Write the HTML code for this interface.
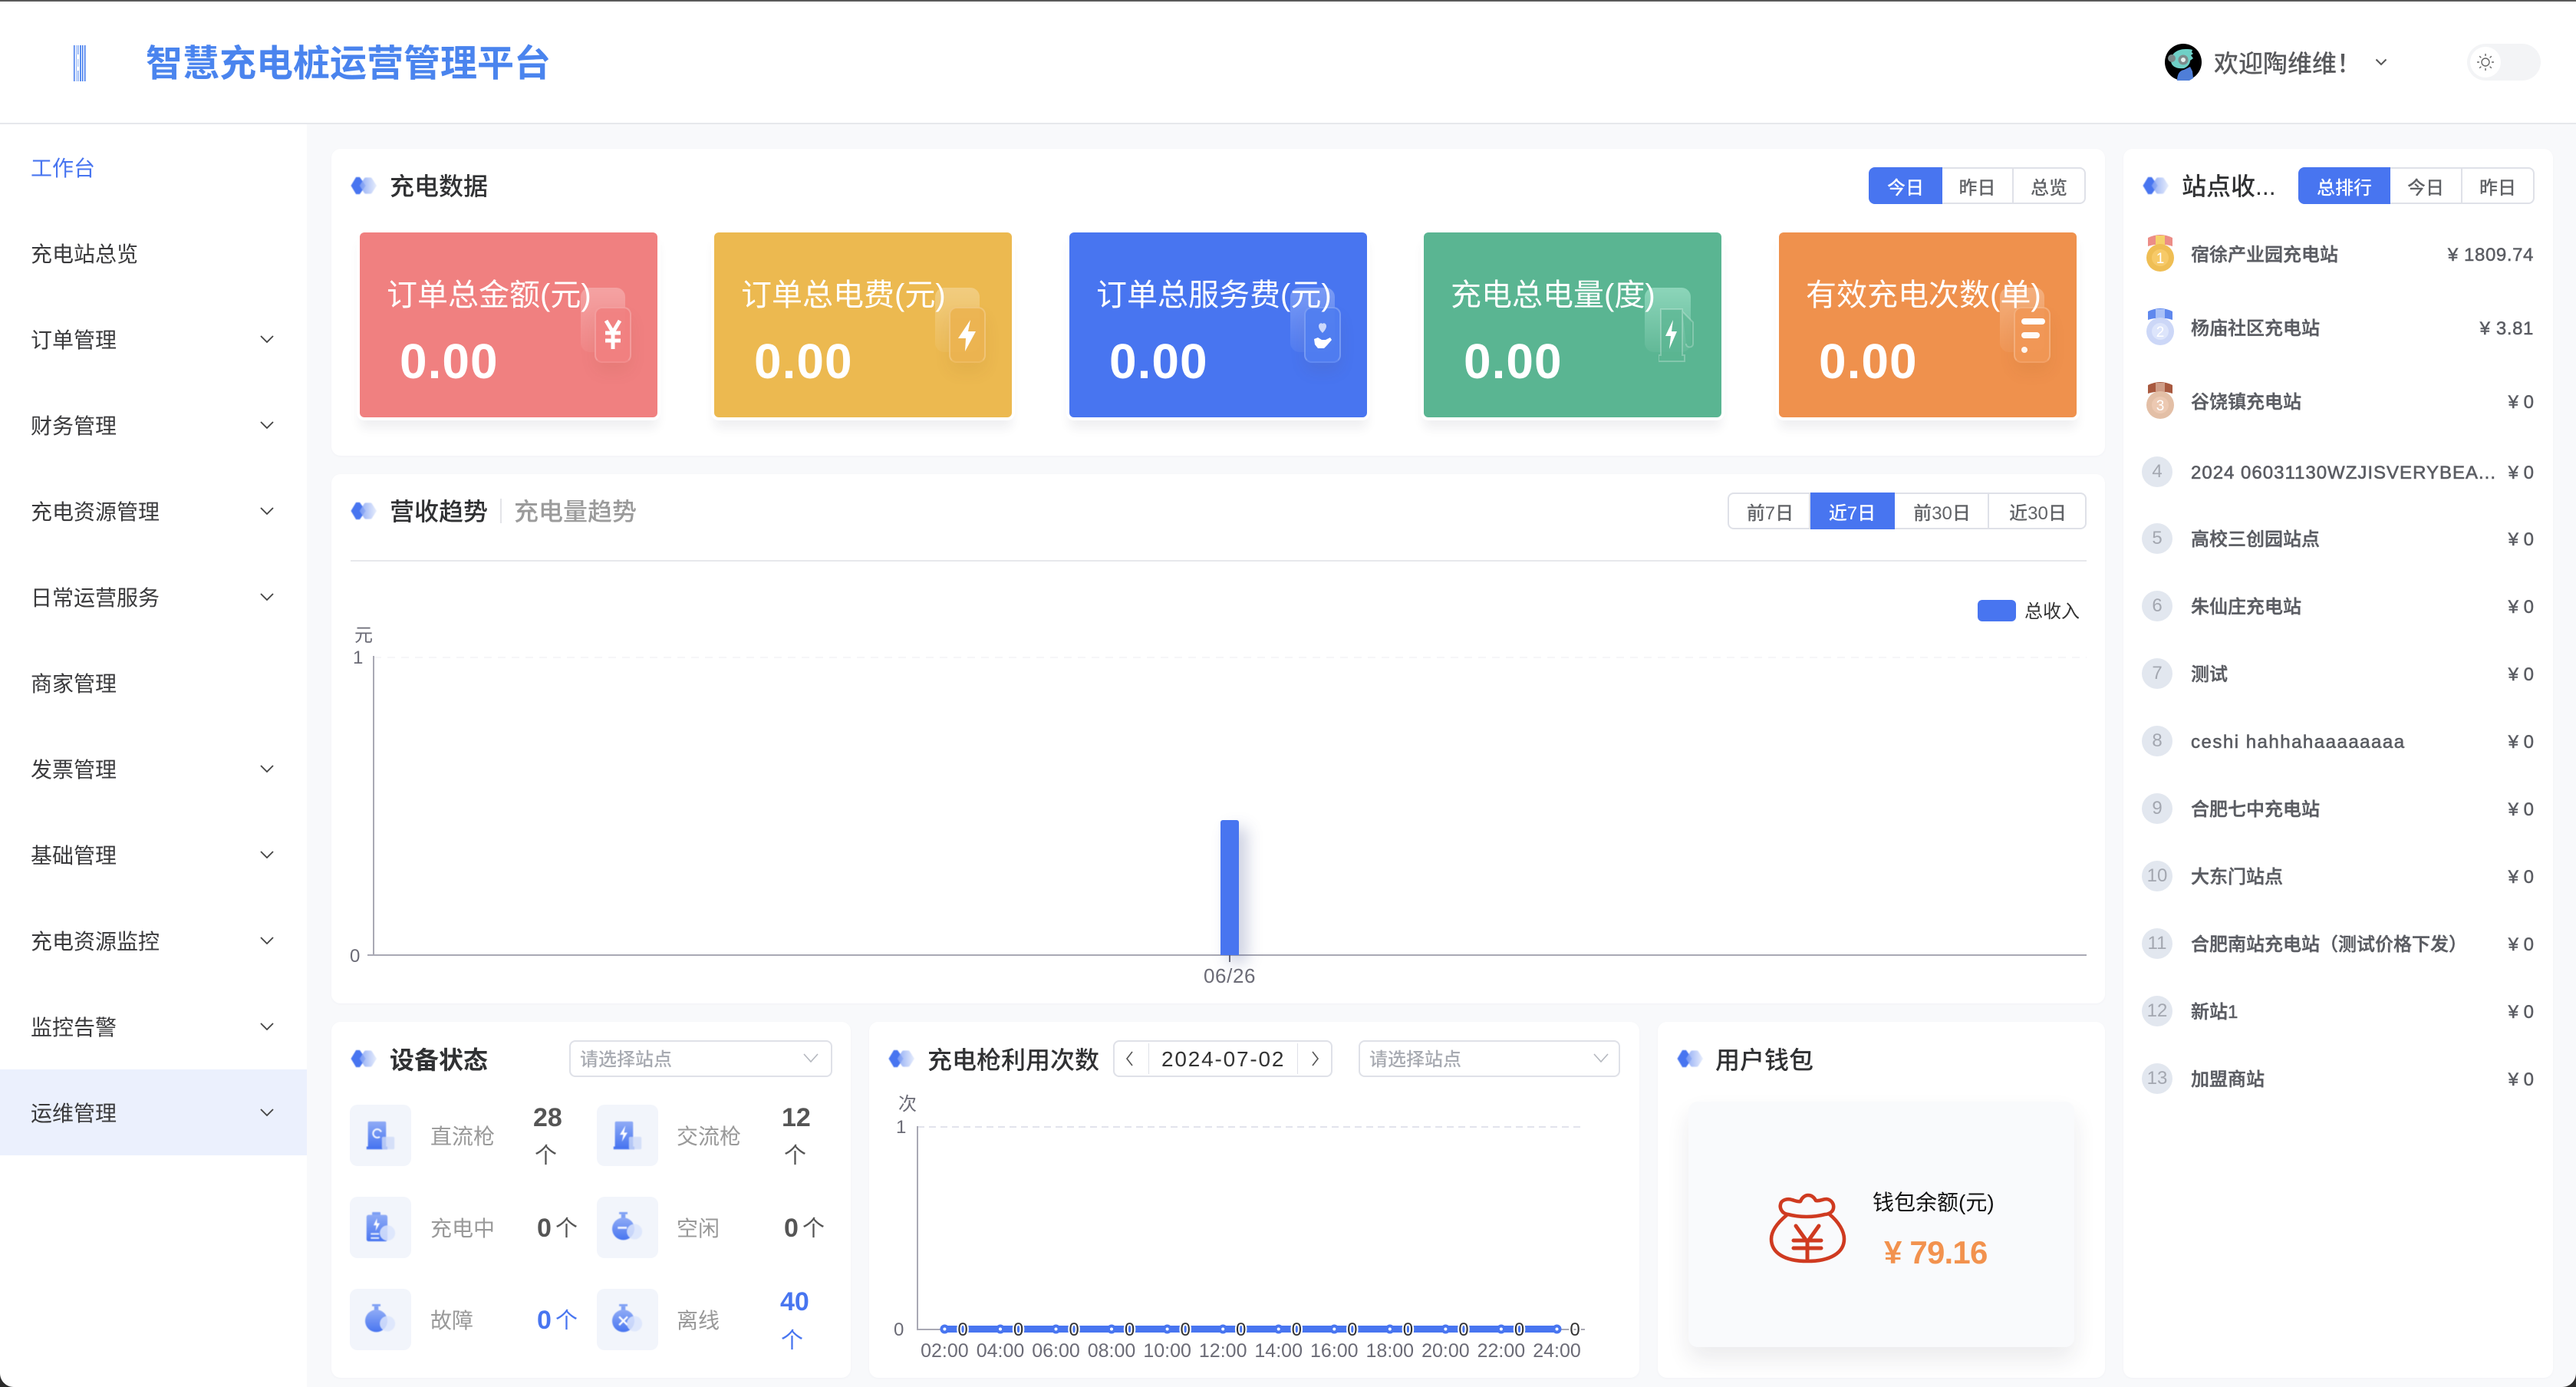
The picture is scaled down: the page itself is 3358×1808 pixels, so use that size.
<!DOCTYPE html>
<html lang="zh-CN">
<head>
<meta charset="utf-8">
<title>智慧充电桩运营管理平台</title>
<style>
*{box-sizing:border-box}
html,body{margin:0;padding:0}
body{width:3358px;height:1808px;overflow:hidden;position:relative;background:#f8f9fb;font-family:"Liberation Sans","Noto Sans CJK SC",sans-serif;color:#333}
.abs{position:absolute}
.t{position:absolute;line-height:40px;margin-top:-18px;white-space:nowrap}
.panel{position:absolute;background:#fff;border-radius:12px;box-shadow:0 1px 3px rgba(30,40,80,.03)}
.h{font-size:32px;font-weight:500;color:#303133}
#header{position:absolute;left:0;top:0;width:3358px;height:162px;background:#fff;border-bottom:2px solid #e6e8ec;border-top:2px solid #5a5a5a}
#side{position:absolute;left:0;top:162px;width:400px;height:1646px;background:#fff}
.m{height:112px;padding-left:40px;font-size:28px;line-height:116px;color:#3a3a3c;position:relative}
.m svg{position:absolute;left:339px;top:51px}
.m.on{background:#ebf0fd}
.seg{position:absolute;height:48px;display:flex;font-size:24px;color:#606266;font-weight:500;background:transparent}
.seg div{display:flex;align-items:center;justify-content:center;border:2px solid #dfe1e8;border-left:0;background:#fff;height:48px}
.seg div:first-child{border-left:2px solid #dfe1e8;border-radius:8px 0 0 8px}
.seg div:last-child{border-radius:0 8px 8px 0}
.seg .a,.seg div.a:first-child{background:#4875f0;color:#fff;border-color:#4875f0}
.card{position:absolute;top:303px;width:388px;height:241px;border-radius:6px;box-shadow:0 0 0 4px #fff,0 14px 14px rgba(30,30,50,.07)}
.card .ct{position:absolute;left:35px;top:62px;font-size:40px;line-height:40px;color:#fff;white-space:nowrap;z-index:3}
.card .cv{position:absolute;left:52px;top:136px;font-size:64px;line-height:64px;color:#fff;font-weight:bold;z-index:3;letter-spacing:1px}
.card .bk{position:absolute;left:288px;top:72px;width:58px;height:84px;border-radius:12px;background:linear-gradient(180deg,rgba(255,255,255,.27),rgba(255,255,255,.05))}
.card .fr{position:absolute;left:306px;top:97px;width:48px;height:73px;border-radius:10px;border:2px solid rgba(255,255,255,.22);border-bottom-color:rgba(255,255,255,.1);box-shadow:0 12px 22px rgba(120,60,20,.07)}
.card svg{position:absolute;left:306px;top:97px}
.tile{position:absolute;width:80px;height:80px;background:#f2f5fb;border-radius:10px}
.tile svg{position:absolute;left:20px;top:20px;filter:blur(.5px)}
.lb{font-size:28px;color:#999}
.val{font-size:34px;font-weight:bold;color:#555}
.ge{font-size:29px;color:#555}
.blue{color:#4875f0}
.sel{position:absolute;height:48px;border:2px solid #dfe1e8;border-radius:8px;background:#fff;top:1356px}
.sel span{position:absolute;left:12px;top:2px;line-height:44px;font-size:24px;font-weight:500;color:#a8abb2;white-space:nowrap}
.sel svg{position:absolute;top:15px}
.rn{font-size:24px;font-weight:500;color:#5b5d63;-webkit-text-stroke:.45px #5b5d63}
.ra{font-size:24px;font-weight:500;color:#5b5d63;-webkit-text-stroke:.5px #5b5d63;right:55px}
.num{position:absolute;left:2792px;width:40px;height:40px;border-radius:50%;background:#e2e7ef;color:#a3a7b0;font-size:24px;line-height:40px;text-align:center}
.ax{font-size:24px;color:#6b6b76}
.ti{filter:blur(.5px)}
</style>
</head>
<body>
<svg width="0" height="0" style="position:absolute">
<defs>
<linearGradient id="fade" x1="0" x2="1" y1="0" y2="0"><stop offset="0" stop-color="#7d9df3"/><stop offset="1" stop-color="#e3eafc"/></linearGradient>
<linearGradient id="tg" x1="0" x2="0" y1="0" y2="1"><stop offset="0" stop-color="#8fabf6"/><stop offset="1" stop-color="#4875f0"/></linearGradient>
<symbol id="ti" viewBox="0 0 32 22">
<path d="M7 1h4l7 10-7 10H7L1 11z" fill="#4875f0" stroke="#4875f0" stroke-width="1" stroke-linejoin="round"/>
<path d="M19 1h5c1 0 2 .5 2.500 1.500L32 11l-5.500 8.500C26 20.500 25 21 24 21h-5c-1 0-2-.5-2.500-1.500L11 11l5.500-8.500C17 1.500 18 1 19 1z" fill="url(#fade)" opacity=".85"/>
</symbol>
<symbol id="chev" viewBox="0 0 18 10"><path d="M1 1l8 8 8-8" fill="none" stroke="#444" stroke-width="1.8"/></symbol>
<symbol id="chevg" viewBox="0 0 20 12"><path d="M1 1l9 10 9-10" fill="none" stroke="#b5b8bf" stroke-width="1.6"/></symbol>
</defs>
</svg>

<!-- header -->
<div id="header"></div>
<svg class="abs" style="left:96px;top:59px" width="16" height="47"><rect x="0" y="0" width="1.500" height="47" fill="#3f78ee"/><rect x="3" y="0" width="1" height="47" fill="#8fb2f5"/><rect x="5" y="0" width="1.500" height="12" fill="#7ea5f3"/><rect x="5" y="18" width="1.500" height="10" fill="#b0c9f8"/><rect x="5" y="33" width="1.500" height="14" fill="#7ea5f3"/><rect x="8" y="0" width="2" height="47" fill="#5b8ff0"/><rect x="11" y="0" width="1.500" height="47" fill="#3f78ee"/><rect x="14" y="0" width="1.500" height="47" fill="#3f78ee"/></svg>
<div class="t" style="left:190px;top:82px;font-size:48px;line-height:60px;margin-top:-28px;font-weight:bold;color:#4a84ee">智慧充电桩运营管理平台</div>
<svg class="abs" style="left:2822px;top:57px" width="48" height="48" viewBox="0 0 48 48">
<circle cx="24" cy="24" r="24" fill="#000"/>
<path d="M8 22c0-9 8-15 19-15 3 0 6 0 9 1l-1 3 2 2-3 2 3 4-4 3c0 4-3 8-8 10-9 1-17-2-17-10z" fill="#6fd0c6"/>
<circle cx="24" cy="21" r="6.500" fill="#7d8c8c"/><circle cx="24" cy="21" r="3" fill="#e8f3f2"/>
<path d="M16 48c0-8 3-13 9-14l8-4 3 6 1 9-5 3z" fill="#4f7ed8"/>
<circle cx="9" cy="19" r="5" fill="#7b8a8a"/>
</svg>
<div class="t" style="left:2886px;top:81px;font-size:32px;color:#58595c;font-weight:500">欢迎陶维维！</div>
<svg class="abs" style="left:3096px;top:76px" width="16" height="10" viewBox="0 0 16 10"><path d="M1.500 1.500L8 8l6.500-6.500" fill="none" stroke="#555" stroke-width="2"/></svg>
<div class="abs" style="left:3216px;top:57px;width:96px;height:48px;border-radius:24px;background:#f3f4f6"></div>
<div class="abs" style="left:3220px;top:61px;width:40px;height:40px;border-radius:50%;background:#fff"></div>
<svg class="abs" style="left:3228px;top:69px" width="24" height="24" viewBox="0 0 24 24" fill="none" stroke="#666" stroke-width="1.400"><circle cx="12" cy="12" r="5"/><path d="M12 1v3M12 20v3M1 12h3M20 12h3M4.200 4.200l2.100 2.100M17.700 17.700l2.100 2.100M4.200 19.800l2.100-2.100M17.700 6.300l2.100-2.100"/></svg>

<!-- sidebar -->
<div id="side">
<div class="m" style="color:#4875f0">工作台</div>
<div class="m">充电站总览</div>
<div class="m">订单管理<svg width="18" height="10"><use href="#chev"/></svg></div>
<div class="m">财务管理<svg width="18" height="10"><use href="#chev"/></svg></div>
<div class="m">充电资源管理<svg width="18" height="10"><use href="#chev"/></svg></div>
<div class="m">日常运营服务<svg width="18" height="10"><use href="#chev"/></svg></div>
<div class="m">商家管理</div>
<div class="m">发票管理<svg width="18" height="10"><use href="#chev"/></svg></div>
<div class="m">基础管理<svg width="18" height="10"><use href="#chev"/></svg></div>
<div class="m">充电资源监控<svg width="18" height="10"><use href="#chev"/></svg></div>
<div class="m">监控告警<svg width="18" height="10"><use href="#chev"/></svg></div>
<div class="m on">运维管理<svg width="18" height="10"><use href="#chev"/></svg></div>
</div>

<!-- panel 1 -->
<div class="panel" style="left:432px;top:194px;width:2312px;height:400px"></div>
<svg class="abs ti" style="left:457px;top:230px" width="34" height="24"><use href="#ti"/></svg>
<div class="t h" style="left:508px;top:241px">充电数据</div>
<div class="seg" style="left:2436px;top:218px;width:283px">
<div class="a" style="width:96px">今日</div><div style="width:93px">昨日</div><div style="flex:1">总览</div>
</div>

<div class="card" style="left:469px;background:#f08080">
<div class="bk"></div><div class="fr" style="background:rgba(240,128,128,.88)"></div>
<svg width="48" height="73" viewBox="0 0 48 73" fill="none" stroke="#fff" stroke-width="5"><path d="M15 18l9 15 9-15M24 33v22M14 34h20M14 44h20"/></svg>
<div class="ct">订单总金额(元)</div><div class="cv">0.00</div></div>

<div class="card" style="left:931px;background:#ecb950">
<div class="bk"></div><div class="fr" style="background:rgba(235,178,80,.9)"></div>
<svg width="48" height="73" viewBox="0 0 48 73"><path d="M28 17L12 41h10l-1 17 14-26h-10z" fill="#fff"/></svg>
<div class="ct">订单总电费(元)</div><div class="cv">0.00</div></div>

<div class="card" style="left:1394px;background:#4875f0">
<div class="bk"></div><div class="fr" style="background:rgba(80,125,240,.9)"></div>
<svg width="48" height="73" viewBox="0 0 48 73"><path d="M24 34c-4-4-5-7-5-9 0-3 3-5 5-3 2-2 5 0 5 3 0 2-1 5-5 9z" fill="#fff" opacity=".7"/><path d="M13 42l5-2 5 3 5 0 6-3 2 3-6 7-4 4h-8l-4-5z" fill="#fff"/></svg>
<div class="ct">订单总服务费(元)</div><div class="cv">0.00</div></div>

<div class="card" style="left:1856px;background:#5ab592">
<div class="bk" style="background:linear-gradient(180deg,rgba(190,245,225,.5),rgba(255,255,255,.05));width:60px"></div>
<svg width="60" height="73" viewBox="0 0 60 73" fill="none"><path d="M3 3h28v60h3v8H0v-8h3zM31 6l14 14v28c0 6-9 6-9 0" stroke="rgba(255,255,255,.25)" stroke-width="2" fill="rgba(90,181,146,.7)"/><path d="M19 17L9 38h7l-2 17 10-23h-7z" fill="#fff"/></svg>
<div class="ct">充电总电量(度)</div><div class="cv">0.00</div></div>

<div class="card" style="left:2319px;background:#ef914d">
<div class="bk"></div><div class="fr" style="background:rgba(240,150,85,.88)"></div>
<svg width="48" height="73" viewBox="0 0 48 73" fill="#fff"><rect x="10" y="15" width="31" height="8" rx="4"/><rect x="10" y="33" width="24" height="8" rx="4" opacity=".95"/><rect x="10" y="52" width="8" height="8" rx="4" opacity=".9"/></svg>
<div class="ct">有效充电次数(单)</div><div class="cv">0.00</div></div>

<!-- panel 2 -->
<div class="panel" style="left:432px;top:618px;width:2312px;height:690px"></div>
<svg class="abs ti" style="left:457px;top:654px" width="34" height="24"><use href="#ti"/></svg>
<div class="t h" style="left:508px;top:665px">营收趋势</div>
<div class="abs" style="left:652px;top:650px;width:2px;height:32px;background:#e3e4e8"></div>
<div class="t" style="left:670px;top:665px;font-size:32px;color:#9b9b9b;font-weight:500">充电量趋势</div>
<div class="seg" style="left:2252px;top:642px;width:468px">
<div style="width:108px;padding-left:3px">前7日</div><div class="a" style="width:110px;padding-left:1px">近7日</div><div style="width:123px;padding-left:2px">前30日</div><div style="flex:1;padding-left:2px">近30日</div>
</div>
<div class="abs" style="left:457px;top:730px;width:2263px;height:2px;background:#e7e8ec"></div>
<div class="abs" style="left:2578px;top:782px;width:50px;height:28px;border-radius:6px;background:#4875f0"></div>
<div class="t" style="left:2639px;top:796px;font-size:24px;color:#333">总收入</div>
<svg class="abs" style="left:440px;top:810px" width="2300" height="490" viewBox="440 810 2300 490">
<line x1="487" y1="857" x2="2720" y2="857" stroke="#f6f6f8" stroke-width="2" stroke-dasharray="10 8"/>
<line x1="487" y1="855" x2="487" y2="1246" stroke="#a9a9b4" stroke-width="2"/>
<line x1="479" y1="1245" x2="2720" y2="1245" stroke="#a9a9b4" stroke-width="2"/>
<line x1="1603" y1="1245" x2="1603" y2="1254" stroke="#6b6b76" stroke-width="2"/>
</svg>
<div class="abs" style="left:1591px;top:1069px;width:24px;height:176px;background:#4875f0;border-radius:3px 3px 0 0;box-shadow:10px 10px 20px rgba(60,75,140,.28)"></div>
<div class="t ax" style="left:462px;top:827px">元</div>
<div class="t ax" style="left:460px;top:856px">1</div>
<div class="t ax" style="left:456px;top:1245px">0</div>
<div class="t" style="left:1569px;top:1270px;font-size:26px;color:#6b6b76;letter-spacing:.6px">06/26</div>

<!-- device panel -->
<div class="panel" style="left:432px;top:1332px;width:677px;height:464px"></div>
<svg class="abs ti" style="left:457px;top:1368px" width="34" height="24"><use href="#ti"/></svg>
<div class="t h" style="left:508px;top:1380px;font-weight:bold">设备状态</div>
<div class="sel" style="left:742px;width:343px"><span>请选择站点</span><svg style="left:303px" width="20" height="12"><use href="#chevg"/></svg></div>

<div class="tile" style="left:456px;top:1440px"><svg width="40" height="40" viewBox="0 0 44 44"><rect x="4" y="2" width="26" height="38" rx="2" fill="url(#tg)"/><rect x="2" y="38" width="30" height="4" fill="#4875f0"/><rect x="24" y="24" width="18" height="18" rx="2" fill="#cdd9f8" opacity=".8"/><path d="M23 17a6 6 0 1 0-2 7" fill="none" stroke="#fff" stroke-width="2.400" opacity=".9"/></svg></div>
<div class="t lb" style="left:561px;top:1480px">直流枪</div>
<div class="t val" style="left:695px;top:1455px">28</div>
<div class="t ge" style="left:697px;top:1505px">个</div>

<div class="tile" style="left:778px;top:1440px"><svg width="40" height="40" viewBox="0 0 44 44"><rect x="4" y="2" width="26" height="38" rx="2" fill="url(#tg)"/><rect x="2" y="38" width="30" height="4" fill="#4875f0"/><rect x="24" y="24" width="18" height="18" rx="2" fill="#cdd9f8" opacity=".8"/><path d="M19 8l-8 13h5l-2 10 8-13h-5z" fill="#fff"/></svg></div>
<div class="t lb" style="left:882px;top:1480px">交流枪</div>
<div class="t val" style="left:1019px;top:1455px">12</div>
<div class="t ge" style="left:1022px;top:1505px">个</div>

<div class="tile" style="left:456px;top:1560px"><svg width="40" height="40" viewBox="0 0 44 44"><rect x="10" y="0" width="12" height="5" rx="1" fill="#7e9ff4"/><rect x="2" y="4" width="30" height="38" rx="3" fill="url(#tg)"/><path d="M17 9l-5 10h4l-1 8 6-11h-4z" fill="#fff"/><rect x="8" y="30" width="12" height="2.500" fill="#fff" opacity=".8"/><rect x="8" y="36" width="12" height="2.500" fill="#fff" opacity=".8"/><circle cx="32" cy="30" r="11" fill="#dbe4fb" opacity=".85"/></svg></div>
<div class="t lb" style="left:561px;top:1600px">充电中</div>
<div class="t val" style="left:700px;top:1599px">0</div>
<div class="t ge" style="left:724px;top:1600px">个</div>

<div class="tile" style="left:778px;top:1560px"><svg width="40" height="40" viewBox="0 0 44 44"><rect x="10" y="0" width="12" height="3" fill="#7e9ff4"/><rect x="13" y="3" width="6" height="6" fill="#7e9ff4"/><circle cx="16" cy="24" r="16" fill="url(#tg)"/><rect x="8" y="21" width="13" height="3" fill="#fff" opacity=".9"/><circle cx="32" cy="28" r="11" fill="#dbe4fb" opacity=".85"/></svg></div>
<div class="t lb" style="left:882px;top:1600px">空闲</div>
<div class="t val" style="left:1022px;top:1599px">0</div>
<div class="t ge" style="left:1046px;top:1600px">个</div>

<div class="tile" style="left:456px;top:1680px"><svg width="40" height="40" viewBox="0 0 44 44"><rect x="10" y="0" width="12" height="3" fill="#7e9ff4"/><rect x="13" y="3" width="6" height="6" fill="#7e9ff4"/><circle cx="16" cy="24" r="16" fill="url(#tg)"/><circle cx="32" cy="28" r="11" fill="#dbe4fb" opacity=".85"/></svg></div>
<div class="t lb" style="left:561px;top:1720px">故障</div>
<div class="t val blue" style="left:700px;top:1719px">0</div>
<div class="t ge blue" style="left:724px;top:1720px">个</div>

<div class="tile" style="left:778px;top:1680px"><svg width="40" height="40" viewBox="0 0 44 44"><rect x="10" y="0" width="12" height="3" fill="#7e9ff4"/><rect x="13" y="3" width="6" height="6" fill="#7e9ff4"/><circle cx="16" cy="24" r="16" fill="url(#tg)"/><path d="M10 18l12 12M22 18L10 30" stroke="#fff" stroke-width="2.600"/><circle cx="32" cy="28" r="11" fill="#dbe4fb" opacity=".85"/></svg></div>
<div class="t lb" style="left:882px;top:1720px">离线</div>
<div class="t val blue" style="left:1017px;top:1695px">40</div>
<div class="t ge blue" style="left:1018px;top:1746px">个</div>

<!-- usage panel -->
<div class="panel" style="left:1133px;top:1332px;width:1004px;height:464px"></div>
<svg class="abs ti" style="left:1158px;top:1368px" width="34" height="24"><use href="#ti"/></svg>
<div class="t h" style="left:1209px;top:1380px">充电枪利用次数</div>
<div class="abs" style="left:1451px;top:1356px;width:286px;height:48px;border:2px solid #dfe1e8;border-radius:8px;background:#fff"></div>
<div class="abs" style="left:1497px;top:1360px;width:1px;height:40px;background:#dfe1e8"></div>
<div class="abs" style="left:1691px;top:1360px;width:1px;height:40px;background:#dfe1e8"></div>
<svg class="abs" style="left:1466px;top:1369px" width="12" height="22" viewBox="0 0 12 22"><path d="M10 2L3 11l7 9" fill="none" stroke="#555" stroke-width="1.600"/></svg>
<svg class="abs" style="left:1709px;top:1369px" width="12" height="22" viewBox="0 0 12 22"><path d="M2 2l7 9-7 9" fill="none" stroke="#555" stroke-width="1.600"/></svg>
<div class="t" style="left:1514px;top:1379px;font-size:28px;color:#333;letter-spacing:1.800px">2024-07-02</div>
<div class="sel" style="left:1771px;width:341px"><span>请选择站点</span><svg style="left:304px" width="20" height="12"><use href="#chevg"/></svg></div>

<svg class="abs" style="left:1150px;top:1420px" width="960" height="370" viewBox="1150 1420 960 370" font-family="Liberation Sans, sans-serif">
<line x1="1196" y1="1469" x2="2064" y2="1469" stroke="#e2e3ec" stroke-width="2" stroke-dasharray="9 6"/>
<line x1="1196" y1="1468" x2="1196" y2="1734" stroke="#a9a9b4" stroke-width="2"/>
<line x1="1196" y1="1733" x2="2066" y2="1733" stroke="#a9a9b4" stroke-width="2"/>
<rect x="1228" y="1728" width="804" height="9" fill="#4875f0"/>
<g fill="#4875f0"><circle cx="1231.400" cy="1732.500" r="6"/><circle cx="1304" cy="1732.500" r="6"/><circle cx="1376.500" cy="1732.500" r="6"/><circle cx="1449" cy="1732.500" r="6"/><circle cx="1521.600" cy="1732.500" r="6"/><circle cx="1594.200" cy="1732.500" r="6"/><circle cx="1666.700" cy="1732.500" r="6"/><circle cx="1739.300" cy="1732.500" r="6"/><circle cx="1811.800" cy="1732.500" r="6"/><circle cx="1884.400" cy="1732.500" r="6"/><circle cx="1956.900" cy="1732.500" r="6"/><circle cx="2029.500" cy="1732.500" r="6"/></g>
<g fill="#fff"><circle cx="1231.400" cy="1732.500" r="2"/><circle cx="1304" cy="1732.500" r="2"/><circle cx="1376.500" cy="1732.500" r="2"/><circle cx="1449" cy="1732.500" r="2"/><circle cx="1521.600" cy="1732.500" r="2"/><circle cx="1594.200" cy="1732.500" r="2"/><circle cx="1666.700" cy="1732.500" r="2"/><circle cx="1739.300" cy="1732.500" r="2"/><circle cx="1811.800" cy="1732.500" r="2"/><circle cx="1884.400" cy="1732.500" r="2"/><circle cx="1956.900" cy="1732.500" r="2"/><circle cx="2029.500" cy="1732.500" r="2"/></g>
<g font-size="24" fill="#333" stroke="#fff" stroke-width="4" paint-order="stroke" text-anchor="middle">
<text x="1255" y="1741">0</text><text x="1327.500" y="1741">0</text><text x="1400" y="1741">0</text><text x="1472.600" y="1741">0</text><text x="1545.200" y="1741">0</text><text x="1617.700" y="1741">0</text><text x="1690.300" y="1741">0</text><text x="1762.800" y="1741">0</text><text x="1835.400" y="1741">0</text><text x="1907.900" y="1741">0</text><text x="1980.500" y="1741">0</text><text x="2053" y="1741">0</text>
</g>
<g font-size="25" fill="#6b6b76" text-anchor="middle">
<text x="1231.400" y="1769">02:00</text><text x="1304" y="1769">04:00</text><text x="1376.500" y="1769">06:00</text><text x="1449" y="1769">08:00</text><text x="1521.600" y="1769">10:00</text><text x="1594.200" y="1769">12:00</text><text x="1666.700" y="1769">14:00</text><text x="1739.300" y="1769">16:00</text><text x="1811.800" y="1769">18:00</text><text x="1884.400" y="1769">20:00</text><text x="1956.900" y="1769">22:00</text><text x="2029.500" y="1769">24:00</text>
</g>
</svg>
<div class="t ax" style="left:1171px;top:1438px">次</div>
<div class="t ax" style="left:1168px;top:1468px">1</div>
<div class="t ax" style="left:1165px;top:1732px">0</div>

<!-- wallet -->
<div class="panel" style="left:2161px;top:1332px;width:583px;height:464px"></div>
<svg class="abs ti" style="left:2186px;top:1368px" width="34" height="24"><use href="#ti"/></svg>
<div class="t h" style="left:2236px;top:1380px">用户钱包</div>
<div class="abs" style="left:2201px;top:1436px;width:503px;height:320px;background:#f9fafc;border-radius:12px;box-shadow:0 16px 30px rgba(30,30,50,.09)"></div>
<svg class="abs" style="left:2305px;top:1555px" width="102" height="92" viewBox="0 0 102 92" fill="none" stroke="#cf3a20" stroke-width="4.600" stroke-linecap="round" stroke-linejoin="round">
<path d="M26 28c-9-1-11-9-10-13 1-6 9-8 15-6 4 1 7 3 11 2 2-5 6-8 10-8 5 0 8 3 10 7 5 1 9-2 14-2 7 1 10 7 9 12-1 6-8 8-11 8-15 4-33 4-48 0z"/>
<path d="M24 29C12 39 4 50 4 60c0 18 17 29 47 29s48-11 48-29c0-10-7-22-19-32"/>
<path d="M36 43l15 21 15-21M51 64v22M33 62h36M33 72h36" stroke-width="5"/>
</svg>
<div class="t" style="left:2441px;top:1566px;font-size:28px;color:#111">钱包余额(元)</div>
<div class="t" style="left:2456px;top:1631px;font-size:42px;font-weight:bold;color:#f2924e;letter-spacing:-.8px">¥ 79.16</div>

<!-- ranking -->
<div class="panel" style="left:2768px;top:194px;width:560px;height:1602px"></div>
<svg class="abs ti" style="left:2793px;top:230px" width="34" height="24"><use href="#ti"/></svg>
<div class="t h" style="left:2844px;top:241px">站点收...</div>
<div class="seg" style="left:2996px;top:218px;width:308px">
<div class="a" style="width:120px">总排行</div><div style="width:94px">今日</div><div style="flex:1">昨日</div>
</div>

<svg class="abs" style="left:2798px;top:306px" width="36" height="48" viewBox="0 0 36 48"><path d="M2 4q16-8 32 0v11q-16-5-32 0z" fill="#ec8d87"/><path d="M12 1h12v13H12z" fill="#f5d26a"/><circle cx="18" cy="30" r="18" fill="#efbe54"/><circle cx="18" cy="30" r="11" fill="#f7ca68"/><text x="18" y="37" font-size="19" font-family="Liberation Sans" fill="#fff" text-anchor="middle">1</text></svg>
<div class="t rn" style="left:2856px;top:331px">宿徐产业园充电站</div>
<div class="t ra" style="top:331px;right:55px;letter-spacing:.6px">¥ 1809.74</div>

<svg class="abs" style="left:2798px;top:402px" width="36" height="48" viewBox="0 0 36 48"><path d="M2 4q16-8 32 0v11q-16-5-32 0z" fill="#5f88ee"/><path d="M12 1h12v13H12z" fill="#a9c1f7"/><circle cx="18" cy="30" r="18" fill="#ccd7f7"/><circle cx="18" cy="30" r="11" fill="#dde5fb"/><text x="18" y="37" font-size="19" font-family="Liberation Sans" fill="#fff" text-anchor="middle">2</text></svg>
<div class="t rn" style="left:2856px;top:427px">杨庙社区充电站</div>
<div class="t ra" style="top:427px;right:55px;letter-spacing:.6px">¥ 3.81</div>

<svg class="abs" style="left:2798px;top:498px" width="36" height="48" viewBox="0 0 36 48"><path d="M2 4q16-8 32 0v11q-16-5-32 0z" fill="#a8593f"/><path d="M12 1h12v13H12z" fill="#cf9d87"/><circle cx="18" cy="30" r="18" fill="#e3bfa6"/><circle cx="18" cy="30" r="11" fill="#ecc9b2"/><text x="18" y="37" font-size="19" font-family="Liberation Sans" fill="#fff" text-anchor="middle">3</text></svg>
<div class="t rn" style="left:2856px;top:523px">谷饶镇充电站</div>
<div class="t ra" style="top:523px;right:55px">¥ 0</div>

<div class="num" style="top:595px">4</div><div class="t rn" style="left:2856px;top:615px;letter-spacing:1px;-webkit-text-stroke:.6px #5b5d63">2024 06031130WZJISVERYBEA...</div><div class="t ra" style="top:615px">¥ 0</div>
<div class="num" style="top:682px">5</div><div class="t rn" style="left:2856px;top:702px">高校三创园站点</div><div class="t ra" style="top:702px">¥ 0</div>
<div class="num" style="top:770px">6</div><div class="t rn" style="left:2856px;top:790px">朱仙庄充电站</div><div class="t ra" style="top:790px">¥ 0</div>
<div class="num" style="top:858px">7</div><div class="t rn" style="left:2856px;top:878px">测试</div><div class="t ra" style="top:878px">¥ 0</div>
<div class="num" style="top:946px">8</div><div class="t rn" style="left:2856px;top:966px;letter-spacing:1.500px;-webkit-text-stroke:.6px #5b5d63">ceshi hahhahaaaaaaaa</div><div class="t ra" style="top:966px">¥ 0</div>
<div class="num" style="top:1034px">9</div><div class="t rn" style="left:2856px;top:1054px">合肥七中充电站</div><div class="t ra" style="top:1054px">¥ 0</div>
<div class="num" style="top:1122px">10</div><div class="t rn" style="left:2856px;top:1142px">大东门站点</div><div class="t ra" style="top:1142px">¥ 0</div>
<div class="num" style="top:1210px">11</div><div class="t rn" style="left:2856px;top:1230px">合肥南站充电站（测试价格下发）</div><div class="t ra" style="top:1230px">¥ 0</div>
<div class="num" style="top:1298px">12</div><div class="t rn" style="left:2856px;top:1318px">新站1</div><div class="t ra" style="top:1318px">¥ 0</div>
<div class="num" style="top:1386px">13</div><div class="t rn" style="left:2856px;top:1406px">加盟商站</div><div class="t ra" style="top:1406px">¥ 0</div>

<!-- window corners -->
<svg class="abs" style="left:0;top:1790px" width="18" height="18" viewBox="0 0 18 18"><path d="M0 0v18h18C8 18 0 10 0 0z" fill="#2c2c2c"/></svg>
<svg class="abs" style="left:3340px;top:1790px" width="18" height="18" viewBox="0 0 18 18"><path d="M18 0v18H0c10 0 18-8 18-18z" fill="#2c2c2c"/></svg>
</body>
</html>
